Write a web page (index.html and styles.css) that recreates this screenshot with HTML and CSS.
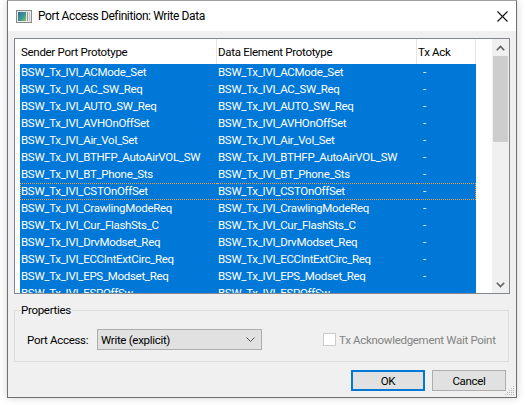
FILE: index.html
```html
<!DOCTYPE html>
<html>
<head>
<meta charset="utf-8">
<link rel="stylesheet" href="styles.css">
</head>
<body>
<div class="window">
  <div class="titlebar">
    <svg class="app-icon" width="16" height="13" viewBox="0 0 16 13">
      <defs>
        <linearGradient id="g1" x1="0" y1="0" x2="1" y2="1">
          <stop offset="0" stop-color="#2f6fa0"/>
          <stop offset="0.6" stop-color="#3f9b8c"/>
          <stop offset="1" stop-color="#8cc07a"/>
        </linearGradient>
      </defs>
      <rect x="0.5" y="0.5" width="15" height="12" fill="#e8e8e8" stroke="#8a8a8a"/>
      <rect x="2" y="2" width="8" height="9" fill="url(#g1)"/>
      <rect x="11" y="2" width="1" height="9" fill="#9a9a9a"/>
      <rect x="13" y="2" width="1" height="9" fill="#c8c8c8"/>
    </svg>
    <span class="title">Port Access Definition: Write Data</span>
    <svg class="close" width="11" height="11" viewBox="0 0 11 11">
      <path d="M0.5 0.5 L10.5 10.5 M10.5 0.5 L0.5 10.5" stroke="#111" stroke-width="1.1" fill="none"/>
    </svg>
  </div>
  <div class="content">
    <div class="list">
      <div class="grid">
        <div class="header">
          <div class="rowhead"></div>
          <div class="hcell c1">Sender Port Prototype</div>
          <div class="hcell c2">Data Element Prototype</div>
          <div class="hcell c3">Tx Ack</div>
        </div>
        <div class="rows">
          <div class="row"><div class="rowhead"></div><div class="cell c1">BSW_Tx_IVI_ACMode_Set</div><div class="cell c2">BSW_Tx_IVI_ACMode_Set</div><div class="cell c3">-</div></div>
          <div class="row"><div class="rowhead"></div><div class="cell c1">BSW_Tx_IVI_AC_SW_Req</div><div class="cell c2">BSW_Tx_IVI_AC_SW_Req</div><div class="cell c3">-</div></div>
          <div class="row"><div class="rowhead"></div><div class="cell c1">BSW_Tx_IVI_AUTO_SW_Req</div><div class="cell c2">BSW_Tx_IVI_AUTO_SW_Req</div><div class="cell c3">-</div></div>
          <div class="row"><div class="rowhead"></div><div class="cell c1">BSW_Tx_IVI_AVHOnOffSet</div><div class="cell c2">BSW_Tx_IVI_AVHOnOffSet</div><div class="cell c3">-</div></div>
          <div class="row"><div class="rowhead"></div><div class="cell c1">BSW_Tx_IVI_Air_Vol_Set</div><div class="cell c2">BSW_Tx_IVI_Air_Vol_Set</div><div class="cell c3">-</div></div>
          <div class="row"><div class="rowhead"></div><div class="cell c1">BSW_Tx_IVI_BTHFP_AutoAirVOL_SW</div><div class="cell c2">BSW_Tx_IVI_BTHFP_AutoAirVOL_SW</div><div class="cell c3">-</div></div>
          <div class="row"><div class="rowhead"></div><div class="cell c1">BSW_Tx_IVI_BT_Phone_Sts</div><div class="cell c2">BSW_Tx_IVI_BT_Phone_Sts</div><div class="cell c3">-</div></div>
          <div class="row focus"><div class="rowhead"></div><div class="cell c1">BSW_Tx_IVI_CSTOnOffSet</div><div class="cell c2">BSW_Tx_IVI_CSTOnOffSet</div><div class="cell c3">-</div></div>
          <div class="row"><div class="rowhead"></div><div class="cell c1">BSW_Tx_IVI_CrawlingModeReq</div><div class="cell c2">BSW_Tx_IVI_CrawlingModeReq</div><div class="cell c3">-</div></div>
          <div class="row"><div class="rowhead"></div><div class="cell c1">BSW_Tx_IVI_Cur_FlashSts_C</div><div class="cell c2">BSW_Tx_IVI_Cur_FlashSts_C</div><div class="cell c3">-</div></div>
          <div class="row"><div class="rowhead"></div><div class="cell c1">BSW_Tx_IVI_DrvModset_Req</div><div class="cell c2">BSW_Tx_IVI_DrvModset_Req</div><div class="cell c3">-</div></div>
          <div class="row"><div class="rowhead"></div><div class="cell c1">BSW_Tx_IVI_ECCIntExtCirc_Req</div><div class="cell c2">BSW_Tx_IVI_ECCIntExtCirc_Req</div><div class="cell c3">-</div></div>
          <div class="row"><div class="rowhead"></div><div class="cell c1">BSW_Tx_IVI_EPS_Modset_Req</div><div class="cell c2">BSW_Tx_IVI_EPS_Modset_Req</div><div class="cell c3">-</div></div>
          <div class="row"><div class="rowhead"></div><div class="cell c1">BSW_Tx_IVI_ESPOffSw</div><div class="cell c2">BSW_Tx_IVI_ESPOffSw</div><div class="cell c3">-</div></div>
        </div>
      </div>
      <div class="scrollbar">
        <div class="sbtn">
          <svg width="9" height="6" viewBox="0 0 9 6"><path d="M0.8 5.2 L4.5 1.5 L8.2 5.2" stroke="#606060" stroke-width="1.6" fill="none"/></svg>
        </div>
        <div class="thumb"></div>
        <div class="track"></div>
        <div class="sbtn">
          <svg width="9" height="6" viewBox="0 0 9 6"><path d="M0.8 0.8 L4.5 4.5 L8.2 0.8" stroke="#606060" stroke-width="1.6" fill="none"/></svg>
        </div>
      </div>
    </div>

    <fieldset class="props">
      <legend>Properties</legend>
      <div class="props-row">
        <span class="label">Port Access:</span>
        <div class="combo">
          <span>Write (explicit)</span>
          <svg width="9" height="5" viewBox="0 0 9 5"><path d="M0.5 0.5 L4.5 4.5 L8.5 0.5" stroke="#555" stroke-width="1" fill="none"/></svg>
        </div>
        <label class="check">
          <span class="box"></span>
          <span class="check-label">Tx Acknowledgement Wait Point</span>
        </label>
      </div>
    </fieldset>

    <div class="buttons">
      <div class="btn default">OK</div>
      <div class="btn">Cancel</div>
    </div>
    <svg class="grip" width="10" height="10" viewBox="0 0 10 10">
      <g fill="#b8b8b8">
        <rect x="8" y="0" width="1" height="1"/>
        <rect x="6" y="2" width="1" height="1"/><rect x="8" y="2" width="1" height="1"/>
        <rect x="4" y="4" width="1" height="1"/><rect x="6" y="4" width="1" height="1"/><rect x="8" y="4" width="1" height="1"/>
        <rect x="2" y="6" width="1" height="1"/><rect x="4" y="6" width="1" height="1"/><rect x="6" y="6" width="1" height="1"/><rect x="8" y="6" width="1" height="1"/>
        <rect x="0" y="8" width="1" height="1"/><rect x="2" y="8" width="1" height="1"/><rect x="4" y="8" width="1" height="1"/><rect x="6" y="8" width="1" height="1"/><rect x="8" y="8" width="1" height="1"/>
      </g>
    </svg>
  </div>
</div>
</body>
</html>
```
FILE: styles.css
```css
* { box-sizing: border-box; }
html, body {
  margin: 0;
  padding: 0;
  background: #ffffff;
  width: 525px;
  height: 405px;
  overflow: hidden;
}
body {
  font-family: Roboto, "Noto Sans", sans-serif;
  font-size: 11.5px;
  letter-spacing: -0.3px;
  color: #000;
}
.window {
  margin-left: 7px;
  width: 510px;
  height: 398px;
  border: 1px solid #707070;
  border-top-color: #a0a0a0;
  box-shadow: 0 0 8px rgba(0,0,0,0.18);
  background: #f0f0f0;
  display: flex;
  flex-direction: column;
}
.titlebar {
  height: 30px;
  background: #fff;
  display: flex;
  align-items: center;
  padding-left: 8px;
  flex: none;
}
.app-icon { flex: none; }
.title {
  margin-left: 6px;
  font-size: 12px;
  letter-spacing: -0.4px;
  color: #000;
  flex: 1;
}
.close { margin-right: 8px; flex: none; }
.content {
  flex: 1;
  position: relative;
  padding: 7px 6px 0 6px;
}
.list {
  height: 256px;
  border: 1px solid #828790;
  background: #fff;
  display: flex;
}
.grid {
  flex: 1;
  overflow: hidden;
  display: flex;
  flex-direction: column;
}
.header {
  height: 25px;
  display: flex;
  flex: none;
  background: #fff;
}
.rowhead { width: 5px; flex: none; }
.hcell {
  display: flex;
  align-items: center;
  padding-left: 1px;
  border-right: 1px solid #e5e5e5;
  padding-top: 1px;
  white-space: nowrap;
}
.c1 { width: 197px; flex: none; }
.c2 { width: 200px; flex: none; }
.c3 { width: 59px; flex: none; }
.cell {
  padding-left: 1px;
  white-space: nowrap;
  overflow: hidden;
  line-height: 17px;
}
.rows { flex: 1; overflow: hidden; }
.row {
  height: 17px;
  display: flex;
  color: #fff;
}
.row .cell { background: #0078d7; }
.row .c3 { padding-left: 6px; }
.row.focus .cell {
  border-top: 1px dotted #f0a040;
  border-bottom: 1px dotted #f0a040;
  line-height: 15px;
}
.row.focus .c1 { border-left: 1px dotted #f0a040; padding-left: 0; }
.row.focus .c3 { border-right: 1px dotted #f0a040; }
.scrollbar {
  width: 17px;
  flex: none;
  background: #f0f0f0;
  display: flex;
  flex-direction: column;
}
.sbtn {
  height: 17px;
  flex: none;
  display: flex;
  align-items: center;
  justify-content: center;
}
.thumb {
  height: 86px;
  margin: 0 1px;
  background: #cdcdcd;
  flex: none;
}
.track { flex: 1; }
.props {
  margin: 10px 0 0 0;
  padding: 0 0 0 12px;
  height: 58px;
  width: 495px;
  border: 1px solid #dcdcdc;
  min-width: 0;
}
.props legend {
  padding: 0 1px;
  margin-left: -7px;
  line-height: 12px;
}
.props-row {
  display: flex;
  align-items: center;
  margin-top: 13px;
  white-space: nowrap;
}
.label { width: 70px; flex: none; }
.combo {
  width: 165px;
  height: 21px;
  background: #e1e1e1;
  border: 1px solid #adadad;
  display: flex;
  align-items: center;
  justify-content: space-between;
  padding: 0 6px 0 3px;
  flex: none;
}
.check {
  margin-left: 61px;
  display: flex;
  align-items: center;
  flex: none;
}
.box {
  width: 13px;
  height: 13px;
  border: 1px solid #cccccc;
  background: #fff;
  margin-right: 3px;
  flex: none;
}
.check-label { color: #838383; }
.buttons {
  display: flex;
  justify-content: flex-end;
  gap: 7px;
  margin-top: 8px;
  padding-right: 4px;
}
.btn {
  width: 74px;
  height: 21px;
  background: #e1e1e1;
  border: 1px solid #adadad;
  display: flex;
  align-items: center;
  justify-content: center;
}
.btn.default { border: 2px solid #0078d7; }
.grip { position: absolute; right: 1px; bottom: 1px; }
```
